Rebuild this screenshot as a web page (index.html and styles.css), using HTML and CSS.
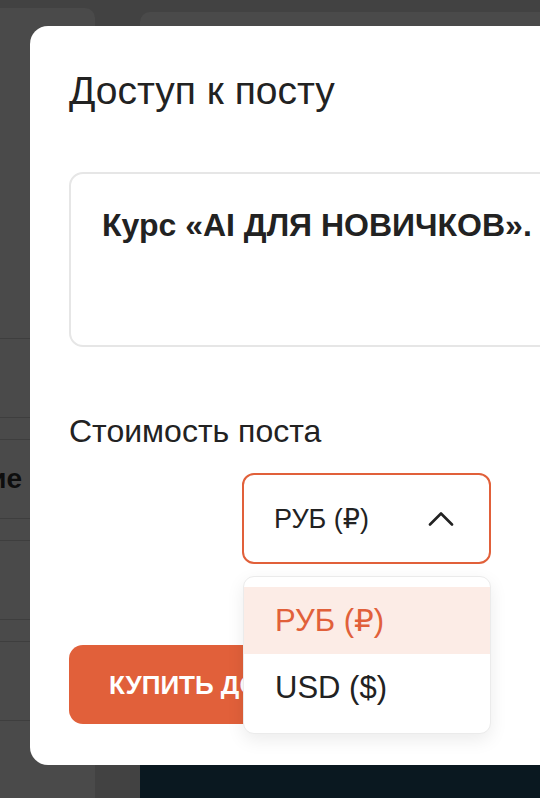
FILE: index.html
```html
<!DOCTYPE html>
<html lang="ru">
<head>
  <meta charset="UTF-8" />
  <meta name="viewport" content="width=device-width, initial-scale=1.0"/>
  <title>Доступ к посту</title>
  <link rel="stylesheet" href="styles.css">
</head>
<body>
  <div class="page">
    <aside class="sidebar">
      <div class="row"></div>
      <div class="row"><span class="row-title">Название</span></div>
      <div class="row"></div>
      <div class="row"></div>
    </aside>
    <main class="content">
      <div class="hero">
        <span class="hero-text">HODL</span>
      </div>
    </main>
  </div>

  <div class="modal">
    <h2 class="modal-title">Доступ к посту</h2>

    <div class="post-box">
      <b>Курс «AI ДЛЯ НОВИЧКОВ».</b>
    </div>

    <div class="price-label">Стоимость поста</div>

    <div class="select">
      <span>РУБ (₽)</span>
      <svg class="chevron" width="26" height="15" viewBox="0 0 26 15">
        <path d="M2 13.5 L13 2.5 L24 13.5" fill="none" stroke="#222" stroke-width="2.6" stroke-linecap="round" stroke-linejoin="round"/>
      </svg>
    </div>

    <button class="buy">КУПИТЬ ДОСТУП</button>

    <ul class="dropdown">
      <li class="option active">РУБ (₽)</li>
      <li class="option">USD ($)</li>
    </ul>
  </div>
</body>
</html>
```

FILE: styles.css
```css
:root {
  --orange: #e1603a;
  --orange-light: #fcece6;
  --text: #222;
  --border: #e6e6e6;
}

body {
  margin: 0;
  height: 798px;
  overflow: hidden;
  background: #424242;
  font-family: "Liberation Sans", Arial, "DejaVu Sans", sans-serif;
  color: var(--text);
}

.page {
  display: flex;
  height: 798px;
}

.sidebar {
  flex: 0 0 95px;
  margin-top: 8px;
  background: #4a4a4a;
  border-radius: 0 10px 0 0;
  overflow: hidden;
  padding-top: 330px;
  display: flex;
  flex-direction: column;
  gap: 21px;
}

.row {
  height: 78px;
  border-top: 1px solid #3e3e3e;
  border-bottom: 1px solid #3e3e3e;
  display: flex;
  align-items: center;
  justify-content: flex-end;
  padding-right: 73px;
}

.row-title {
  flex-shrink: 0;
  font-weight: bold;
  font-size: 28px;
  color: #0e0e0e;
  white-space: nowrap;
}

.content {
  flex: 1;
  min-width: 0;
  margin-left: 45px;
  margin-top: 12px;
  background: #4a4a4a;
  border-radius: 10px 0 0 0;
  display: flex;
  flex-direction: column;
  justify-content: flex-end;
}

.hero {
  height: 160px;
  flex-shrink: 0;
  background: #0a1820;
  overflow: hidden;
  display: flex;
  align-items: flex-start;
  justify-content: center;
}

.hero-text {
  flex-shrink: 0;
  font-size: 150px;
  font-weight: bold;
  line-height: 150px;
  color: #27251f;
  margin-top: -3px;
  letter-spacing: 10px;
}

.modal {
  position: absolute;
  left: 30px;
  top: 26px;
  width: 560px;
  height: 739px;
  box-sizing: border-box;
  padding: 43px 0 41px 39px;
  background: #fff;
  border-radius: 18px;
}

.modal-title {
  margin: 0;
  font-size: 39px;
  line-height: 44px;
  font-weight: normal;
  color: var(--text);
}

.post-box {
  margin-top: 59px;
  height: 175px;
  box-sizing: border-box;
  border: 2px solid var(--border);
  border-radius: 14px;
  padding: 33px 0 0 31px;
  font-size: 32px;
  line-height: 36px;
}

.price-label {
  margin-top: 66px;
  font-size: 32px;
  line-height: 36px;
}

.select {
  margin: 24px 0 0 173px;
  width: 249px;
  height: 91px;
  box-sizing: border-box;
  border: 2px solid var(--orange);
  border-radius: 12px;
  padding: 0 35px 0 30px;
  display: flex;
  align-items: center;
  justify-content: space-between;
  font-size: 27px;
  line-height: 32px;
}

.buy {
  display: block;
  margin-top: 81px;
  width: 380px;
  height: 79px;
  padding: 0 0 0 40px;
  border: none;
  border-radius: 14px;
  background: var(--orange);
  color: #fff;
  font-family: inherit;
  font-size: 26px;
  line-height: 30px;
  font-weight: bold;
  text-align: left;
}

.dropdown {
  position: absolute;
  left: 213px;
  top: 550px;
  width: 248px;
  box-sizing: border-box;
  margin: 0;
  padding: 10px 0 12px;
  list-style: none;
  background: #fff;
  border: 1px solid #ebebeb;
  border-radius: 11px;
  box-shadow: 0 6px 18px rgba(0, 0, 0, 0.08);
}

.option {
  height: 67px;
  line-height: 67px;
  padding-left: 31px;
  font-size: 31px;
}

.option.active {
  background: var(--orange-light);
  color: var(--orange);
}
```
